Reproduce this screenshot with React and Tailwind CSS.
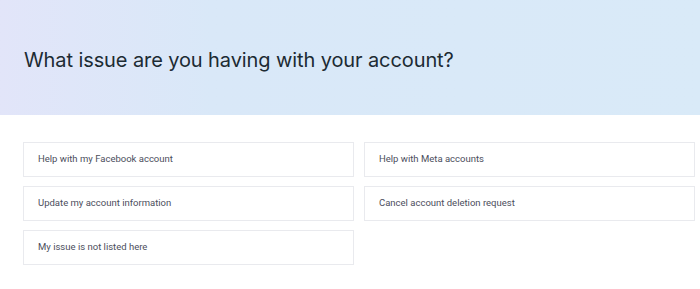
const options = [
  "Help with my Facebook account",
  "Help with Meta accounts",
  "Update my account information",
  "Cancel account deletion request",
  "My issue is not listed here",
];

export default function App() {
  return (
    <div className="w-[700px] h-[289px] bg-white font-['Inter',sans-serif] overflow-hidden">
      <div className="h-[115px] bg-gradient-to-r from-[#e2e5f9] via-[#d9e8f8] via-30% to-[#d9eaf8] flex items-center px-6">
        <h1 className="text-[20px] text-[#1c2b33] pt-[4px] tracking-[-0.1px]">
          What issue are you having with your account?
        </h1>
      </div>
      <div className="grid grid-cols-2 gap-x-[10px] gap-y-[9px] pl-[23px] pr-[5px] pt-[27px]">
        {options.map((o) => (
          <div
            key={o}
            className="h-[35px] border border-[#e9eaee] flex items-center px-[14px] font-['Roboto',sans-serif] text-[9.5px] text-[#4b4e5c]"
          >
            {o}
          </div>
        ))}
      </div>
    </div>
  );
}
